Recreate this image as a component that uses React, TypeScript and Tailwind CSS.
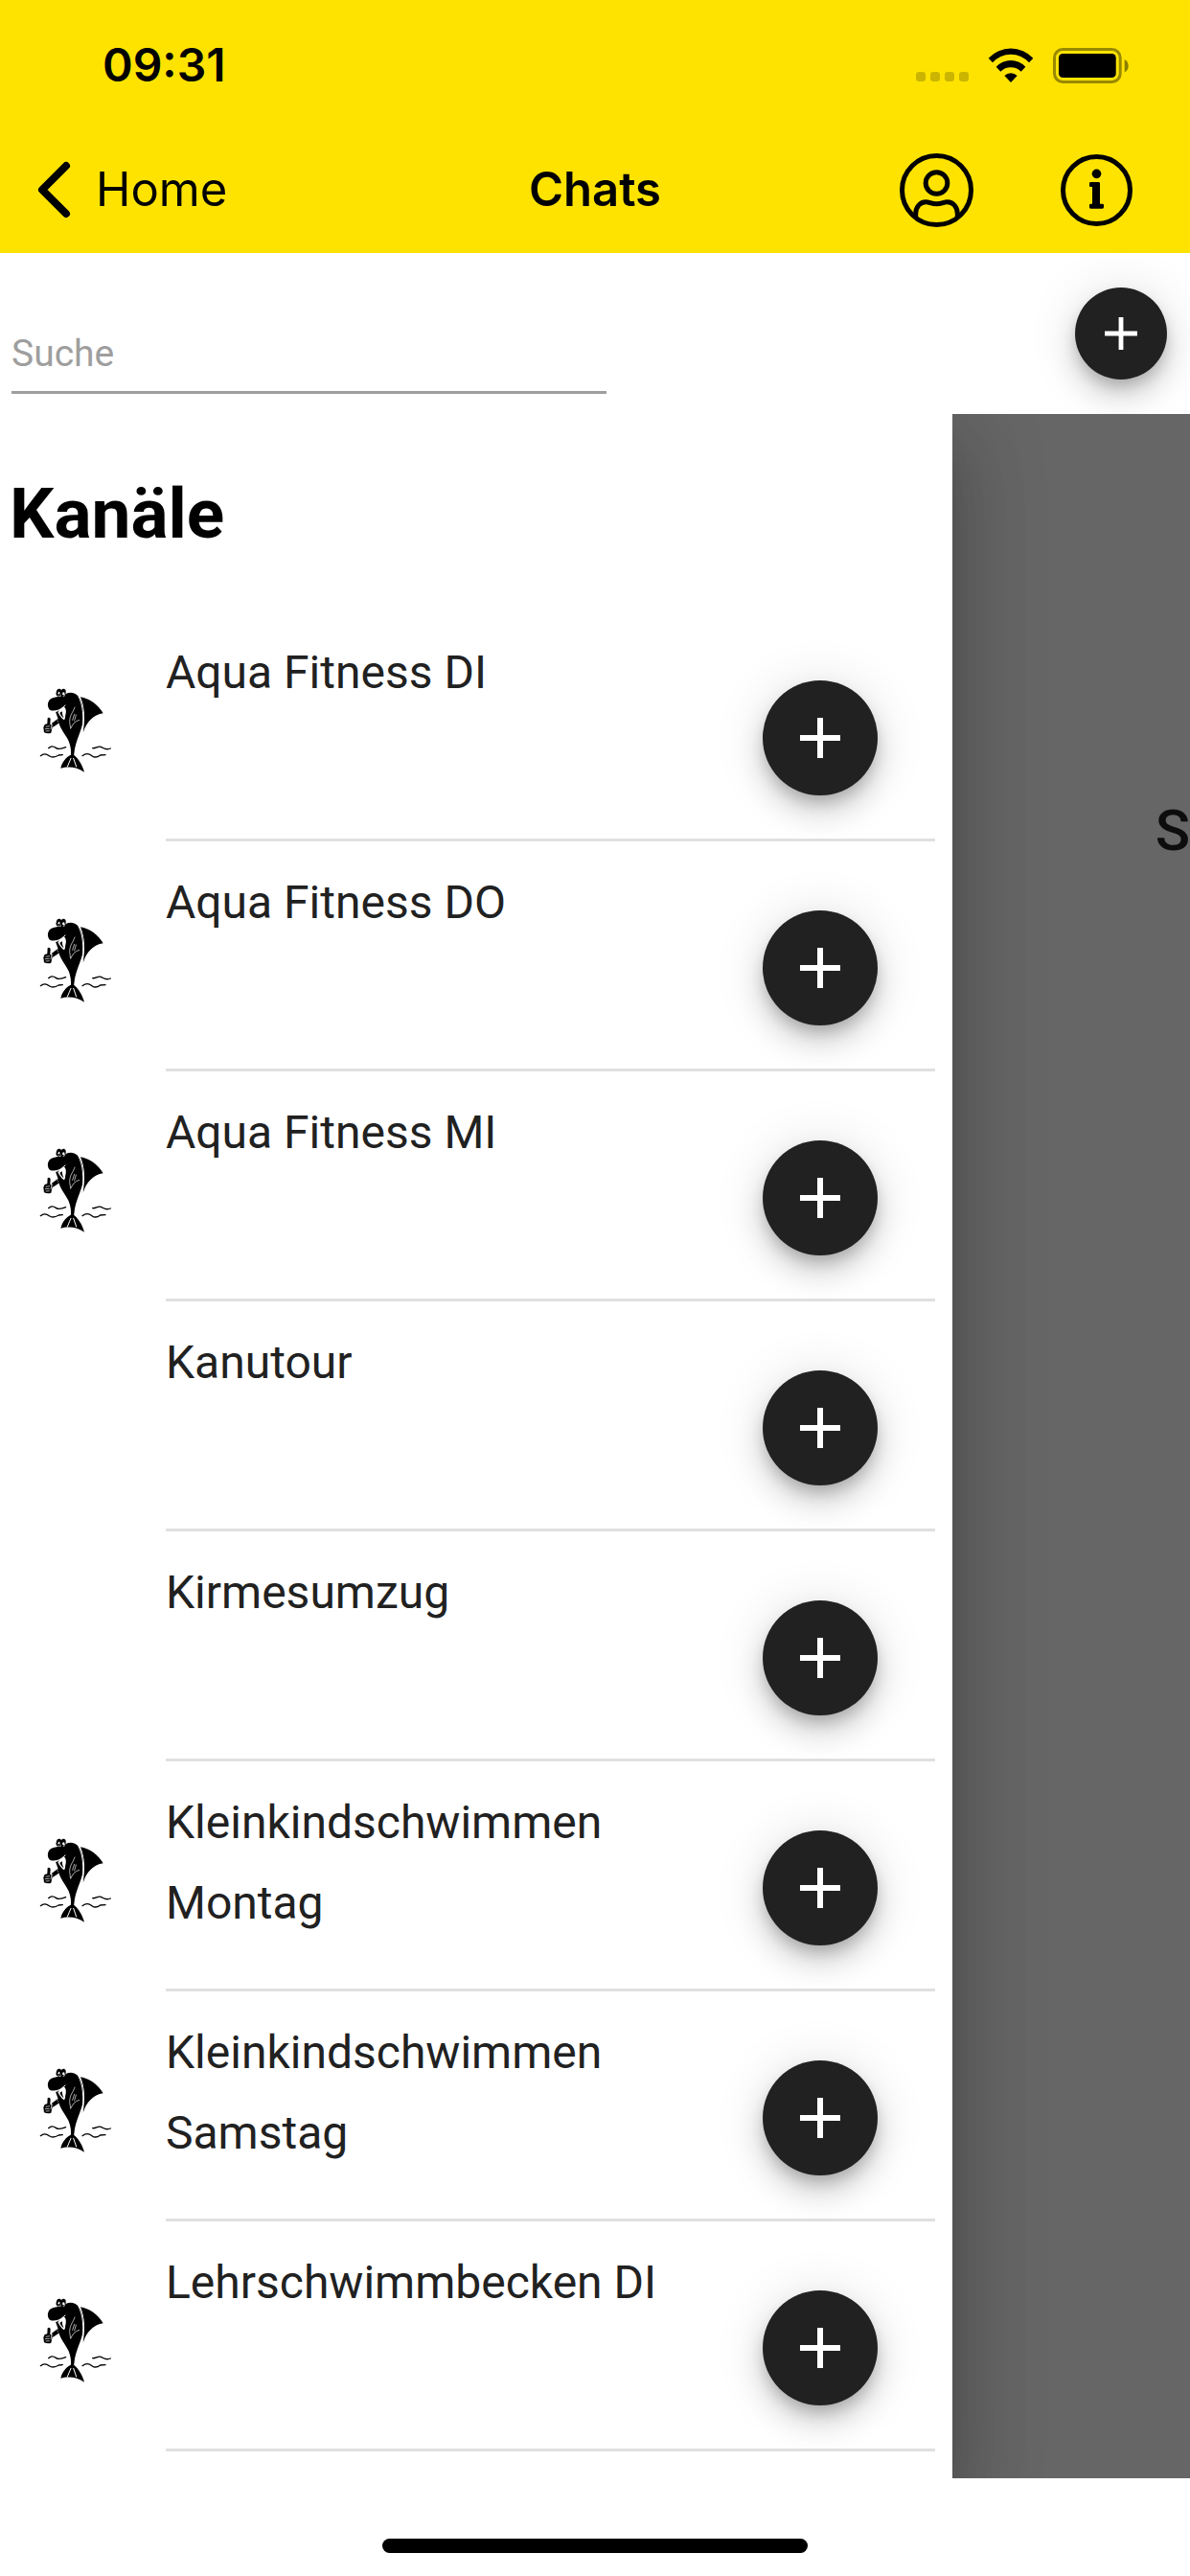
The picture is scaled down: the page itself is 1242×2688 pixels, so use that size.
import { MdAdd } from "react-icons/md";

type Channel = {
  name: string;
  hasAvatar: boolean;
};

const channels: Channel[] = [
  { name: "Aqua Fitness DI", hasAvatar: true },
  { name: "Aqua Fitness DO", hasAvatar: true },
  { name: "Aqua Fitness MI", hasAvatar: true },
  { name: "Kanutour", hasAvatar: false },
  { name: "Kirmesumzug", hasAvatar: false },
  { name: "Kleinkindschwimmen Montag", hasAvatar: true },
  { name: "Kleinkindschwimmen Samstag", hasAvatar: true },
  { name: "Lehrschwimmbecken DI", hasAvatar: true },
];

const WifiIcon = () => (
  <svg viewBox="0 0 142 108" className="h-9 w-12" aria-hidden="true">
    <path d="M1 32A96 96 0 0 1 141 32L128 46A76 76 0 0 0 14 46Z" />
    <path d="M25 59A63 63 0 0 1 117 59L103 74A46 46 0 0 0 39 74Z" />
    <path d="M51 87A28 28 0 0 1 91 87L71 108Z" />
  </svg>
);

const BatteryIcon = () => (
  <svg viewBox="0 0 238 111" className="h-[37px] w-[79px]" aria-hidden="true">
    <rect
      x="4.5"
      y="4.5"
      width="207"
      height="102"
      rx="26"
      fill="none"
      stroke="#000"
      strokeOpacity="0.4"
      strokeWidth="9"
    />
    <rect x="18" y="18" width="180" height="75" rx="13" />
    <path d="M225 36Q237 42 237 56Q237 70 225 76Z" fillOpacity="0.45" />
  </svg>
);

const PersonIcon = () => (
  <svg
    viewBox="0 0 231 231"
    className="size-[77px]"
    fill="none"
    stroke="currentColor"
    strokeWidth="15"
    aria-hidden="true"
  >
    <circle cx="115.500" cy="115.500" r="108" />
    <circle cx="115.500" cy="93" r="34" />
    <path d="M50 198V190C50 168 64 152 82 152C94 152 98 158 115.500 158C133 158 137 152 149 152C167 152 181 168 181 190V198" />
  </svg>
);

const InfoIcon = () => (
  <svg viewBox="0 0 225 225" className="size-[75px]" aria-hidden="true">
    <circle cx="112.500" cy="112.500" r="105" fill="none" stroke="currentColor" strokeWidth="15" />
    <circle cx="112.500" cy="61" r="14.500" />
    <path d="M94 87H119Q123 87 123 91V155H131Q135 155 135 159V166Q135 170 131 170H94Q90 170 90 166V159Q90 155 94 155H99V102H94Q90 102 90 98V91Q90 87 94 87Z" />
  </svg>
);

const DolphinLogo = () => (
  <svg viewBox="0 0 270 300" className="h-[100px] w-[90px]" role="img" aria-label="Delfin">
    {/* body */}
    <path d="M101 45C112 34 132 36 144 50C156 64 161 92 159 120C157 150 140 176 132 214L129 238H119C122 222 119 206 113 190C107 176 90 156 83 136L76 119C90 128 101 122 104 103C106 90 102 84 96 82C84 94 66 97 55 93C46 86 45 70 54 60C64 50 84 54 101 45Z" />
    {/* lower jaw */}
    <path d="M72 98L84 92C88 104 94 118 103 125L98 138L84 132Z" />
    {/* fin */}
    <path d="M150 52C176 56 206 76 221 103C190 107 168 132 158 164C164 124 165 86 150 52Z" />
    {/* tail */}
    <path d="M118 234H130C144 246 156 264 162 287C140 270 110 268 88 275C92 256 104 242 118 234Z" />
    <g fill="none" stroke="#fff" strokeWidth="3" strokeLinecap="round">
      <path d="M144 50C158 76 162 116 155 164" />
      <path d="M120 244L109 270M128 244L137 270" />
      <path d="M65 98C80 98 92 90 102 78" />
      <path d="M132 84C126 102 116 108 116 130L119 151C126 136 132 128 146 124" strokeWidth="2" />
      <path d="M125 124L131 106M131 126L136 108" strokeWidth="2" />
    </g>
    {/* mouth */}
    <path d="M79 99L98 86L103 95C101 105 105 116 99 124C91 120 85 110 79 99Z" fill="#fff" />
    <path d="M85 101L93 97C92 106 95 112 98 118C92 114 88 108 85 101Z" />
    {/* eyes */}
    <ellipse cx="82" cy="38" rx="8" ry="12" transform="rotate(14 82 38)" />
    <ellipse cx="96" cy="39" rx="8" ry="13" transform="rotate(8 96 39)" />
    <ellipse cx="82" cy="42" rx="3" ry="7" fill="#fff" transform="rotate(14 82 42)" />
    <ellipse cx="97" cy="44" rx="4" ry="7" fill="#fff" />
    <circle cx="81" cy="45" r="3" />
    <circle cx="95" cy="47" r="3" />
    {/* arm with raised thumb */}
    <path d="M60 134L76 122L82 134L64 146Z" />
    <path d="M47 118Q53 114 56 121L55 137L63 141L58 164Q48 168 36 163L34 147L38 138L46 136Z" />
    <path
      d="M41 145L54 143M39 152L53 151M41 159L53 158M60 138L57 154"
      fill="none"
      stroke="#fff"
      strokeWidth="2"
    />
    {/* water */}
    <g fill="none" stroke="#000" strokeWidth="4" strokeLinecap="round">
      <path d="M50 212C58 204 66 206 73 211S88 216 104 209" />
      <path d="M25 236C36 227 44 230 52 236S72 240 82 234L94 233" />
      <path d="M188 212C198 214 204 204 214 208S228 220 244 213" />
      <path d="M156 236C166 228 176 228 186 236S204 240 212 234L228 233" />
    </g>
  </svg>
);

const ChannelRow = ({ name, hasAvatar }: Channel) => (
  <li className="flex h-60">
    <div className="w-[173px] shrink-0 pt-[72px] pl-[34px]">{hasAvatar && <DolphinLogo />}</div>
    <div className="mr-[18px] flex flex-1 border-b-3 border-[#e0e0e0] pr-15">
      <p className="flex-1 pt-[22px] text-5xl leading-[84px] text-[#212121]">{name}</p>
      <button
        type="button"
        aria-label={`${name} hinzufügen`}
        className="mt-[72px] flex size-30 shrink-0 items-center justify-center rounded-full bg-[#212121] text-white shadow-[0_9px_15px_-3px_rgba(0,0,0,0.2),0_18px_30px_0_rgba(0,0,0,0.14),0_3px_54px_0_rgba(0,0,0,0.12)]"
      >
        <MdAdd className="size-18" />
      </button>
    </div>
  </li>
);

export default function App() {
  return (
    <div className="flex min-h-screen flex-col bg-white font-[Roboto,sans-serif] text-black">
      <header className="bg-[#fee300] font-[Inter,sans-serif]">
        <div className="flex h-[132px] items-center justify-between pt-1 pr-16 pl-[107px]">
          <span className="text-5xl font-semibold">09:31</span>
          <div className="flex items-center">
            <div className="mt-6 mr-5 flex gap-[5px]">
              <span className="size-[10px] rounded-[3px] bg-black/20" />
              <span className="size-[10px] rounded-[3px] bg-black/20" />
              <span className="size-[10px] rounded-[3px] bg-black/20" />
              <span className="size-[10px] rounded-[3px] bg-black/20" />
            </div>
            <div className="mr-5">
              <WifiIcon />
            </div>
            <BatteryIcon />
          </div>
        </div>
        <nav className="grid h-[132px] grid-cols-[1fr_auto_1fr] items-center">
          <a href="#home" className="flex items-center gap-6 pl-9 text-[49px]">
            <svg
              viewBox="0 0 40 60"
              className="h-15 w-10"
              fill="none"
              stroke="currentColor"
              strokeWidth="8"
              strokeLinecap="round"
              strokeLinejoin="round"
              aria-hidden="true"
            >
              <path d="M33 5L8 30L33 55" />
            </svg>
            Home
          </a>
          <h1 className="text-[49px] font-semibold">Chats</h1>
          <div className="flex items-center justify-end gap-[91px] pr-15">
            <button type="button" aria-label="Profil">
              <PersonIcon />
            </button>
            <button type="button" aria-label="Info">
              <InfoIcon />
            </button>
          </div>
        </nav>
      </header>

      <div className="flex h-[168px] items-start justify-between">
        <input
          type="text"
          placeholder="Suche"
          aria-label="Suche"
          className="mt-[63px] ml-3 h-21 w-1/2 border-b-3 border-[#9e9e9e] pt-[2px] text-[39px] outline-none placeholder:text-[#9e9e9e]"
        />
        <button
          type="button"
          aria-label="Neuer Chat"
          className="mt-9 mr-6 flex size-24 items-center justify-center rounded-full bg-[#212121] text-white shadow-[0_9px_15px_-3px_rgba(0,0,0,0.2),0_18px_30px_0_rgba(0,0,0,0.14),0_3px_54px_0_rgba(0,0,0,0.12)]"
        >
          <MdAdd className="size-[58px]" />
        </button>
      </div>

      <main className="flex flex-1 overflow-hidden">
        <aside className="z-10 w-4/5 bg-white shadow-[0_24px_30px_-15px_rgba(0,0,0,0.2),0_48px_72px_6px_rgba(0,0,0,0.14),0_18px_90px_15px_rgba(0,0,0,0.12)]">
          <h2 className="px-[10px] pt-14 pb-[54px] text-[73px] leading-24 font-bold">Kanäle</h2>
          <ul className="pb-7">
            {channels.map((channel) => (
              <ChannelRow key={channel.name} {...channel} />
            ))}
          </ul>
        </aside>
        <section className="flex flex-1 justify-end bg-[#666666] pt-[395px]">
          <p className="text-[60px] leading-20 font-medium text-[#0d0d0d]">S</p>
        </section>
      </main>

      <footer className="flex h-[102px] items-end justify-center pb-6">
        <div className="h-[15px] w-[444px] rounded-full bg-black" />
      </footer>
    </div>
  );
}
